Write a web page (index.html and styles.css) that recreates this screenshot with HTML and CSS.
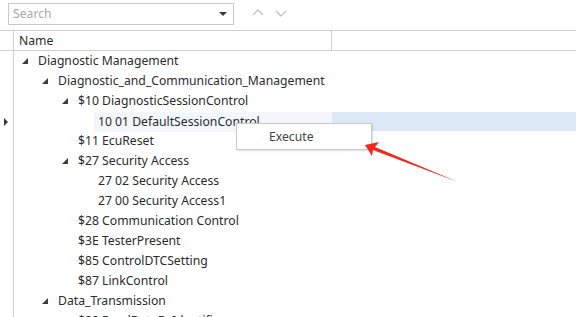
FILE: index.html
```html
<!DOCTYPE html>
<html lang="en">
<head>
  <meta charset="UTF-8">
  <title>Diagnostic Tree</title>
  <link rel="stylesheet" href="styles.css">
</head>
<body>

  <div class="toolbar">
    <div class="search-box">
      <span class="placeholder">Search</span>
      <span class="drop"></span>
    </div>
    <svg class="nav-btn" width="14" height="10" viewBox="0 0 14 10"><path d="M2 7 L7 2 L12 7" fill="none" stroke="#c4c4c4" stroke-width="1.4"/></svg>
    <svg class="nav-btn" width="14" height="10" viewBox="0 0 14 10"><path d="M2 3 L7 8 L12 3" fill="none" stroke="#c4c4c4" stroke-width="1.4"/></svg>
  </div>

  <div class="grid">
    <div class="grid-head">
      <div class="gutter"></div>
      <div class="col-name">Name</div>
      <div class="col-rest"></div>
    </div>

    <div class="grid-body">
      <div class="row"><div class="gutter"></div><div class="cell lv0"><span class="exp"></span>Diagnostic Management</div></div>
      <div class="row"><div class="gutter"></div><div class="cell lv1"><span class="exp"></span>Diagnostic_and_Communication_Management</div></div>
      <div class="row"><div class="gutter"></div><div class="cell lv2"><span class="exp"></span>$10 DiagnosticSessionControl</div></div>
      <div class="row current"><div class="gutter"><span class="cur"></span></div><div class="cell lv3 sel"><span class="sel-text">10 01 DefaultSessionControl</span></div><div class="sel-rest"></div></div>
      <div class="row"><div class="gutter"></div><div class="cell lv2 leaf">$11 EcuReset</div></div>
      <div class="row"><div class="gutter"></div><div class="cell lv2"><span class="exp"></span>$27 Security Access</div></div>
      <div class="row"><div class="gutter"></div><div class="cell lv3">27 02 Security Access</div></div>
      <div class="row"><div class="gutter"></div><div class="cell lv3">27 00 Security Access1</div></div>
      <div class="row"><div class="gutter"></div><div class="cell lv2 leaf">$28 Communication Control</div></div>
      <div class="row"><div class="gutter"></div><div class="cell lv2 leaf">$3E TesterPresent</div></div>
      <div class="row"><div class="gutter"></div><div class="cell lv2 leaf">$85 ControlDTCSetting</div></div>
      <div class="row"><div class="gutter"></div><div class="cell lv2 leaf">$87 LinkControl</div></div>
      <div class="row"><div class="gutter"></div><div class="cell lv1"><span class="exp"></span>Data_Transmission</div></div>
      <div class="row"><div class="gutter"></div><div class="cell lv2 leaf">$22 ReadDataByIdentifier</div></div>
    </div>
  </div>

  <!-- context menu -->
  <div class="menu">
    <div class="menu-item">Execute</div>
  </div>

  <!-- red annotation arrow -->
  <svg class="arrow" width="576" height="317" viewBox="0 0 576 317">
    <polygon points="365,145 379,142 375,147 458,182 373,150 372,156" fill="#f5261c"/>
  </svg>

</body>
</html>
```

FILE: styles.css
```css
body {
  margin: 0;
  width: 576px;
  height: 317px;
  overflow: hidden;
  background: #fff;
  font-family: 'Noto Sans', sans-serif;
  font-size: 12.2px;
  color: #2b2b2b;
  position: relative;
}

.toolbar {
  display: flex;
  align-items: center;
  height: 26px;
  padding-left: 8px;
}

.search-box {
  box-sizing: border-box;
  width: 226px;
  height: 22px;
  margin-top: 1px;
  border: 1px solid #c9c9c9;
  display: flex;
  align-items: center;
  justify-content: space-between;
  padding: 0 6px 0 4px;
}

.placeholder {
  color: #a8a8a8;
  font-size: 12.2px;
}

.drop {
  width: 0;
  height: 0;
  border-left: 4px solid transparent;
  border-right: 4px solid transparent;
  border-top: 4px solid #3a3a3a;
}

.nav-btn {
  margin-left: 17px;
}

.nav-btn + .nav-btn {
  margin-left: 9px;
}

.grid {
  margin-top: 4px;
}

.grid-head {
  display: flex;
  height: 19px;
  border-top: 1px solid #cfcfcf;
  border-bottom: 1px solid #cfcfcf;
}

.gutter {
  width: 13px;
  flex: none;
  border-right: 1px solid #cfcfcf;
  position: relative;
}

.col-name {
  width: 312px;
  padding-left: 5px;
  border-right: 1px solid #cfcfcf;
  line-height: 19px;
}

.col-rest {
  flex: 1;
}

.row {
  display: flex;
  height: 20px;
}

.cell {
  line-height: 20px;
  white-space: nowrap;
  display: flex;
  align-items: center;
}

.lv0 { padding-left: 8px; }
.lv1 { padding-left: 28px; }
.lv2 { padding-left: 48px; }
.lv3 { padding-left: 84px; }
.leaf { padding-left: 64px; }

.exp {
  width: 0;
  height: 0;
  margin-right: 10px;
  border-left: 6px solid transparent;
  border-bottom: 6px solid #3c3c3c;
}

.sel {
  width: 318px;
  padding-left: 80px;
  box-sizing: border-box;
}

.sel-text {
  display: block;
  background: #f3f7fc;
  padding-left: 4px;
  width: 234px;
  margin-top: 1px;
  height: 20px;
}

.current .sel-rest {
  flex: 1;
  background: #dce8f6;
  margin-top: 1px;
}

.cur {
  position: absolute;
  left: 4px;
  top: 7px;
  width: 0;
  height: 0;
  border-top: 4px solid transparent;
  border-bottom: 4px solid transparent;
  border-left: 4px solid #3a3a3a;
}

.menu {
  position: absolute;
  left: 236px;
  top: 123px;
  width: 134px;
  height: 25px;
  background: #fff;
  border: 1px solid #c8c8c8;
  box-shadow: 1px 1px 2px rgba(0,0,0,0.12);
}

.menu-item {
  padding-left: 32px;
  line-height: 25px;
  color: #444;
}

.arrow {
  position: absolute;
  left: 0;
  top: 0;
}
```
